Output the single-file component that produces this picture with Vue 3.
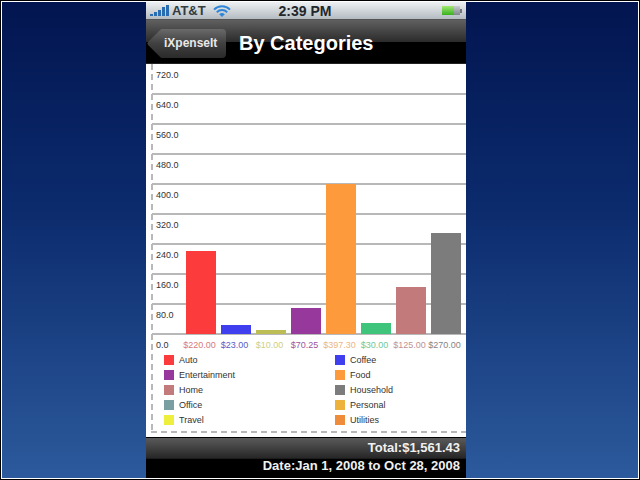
<template>
  <div class="screen">
    <div class="desktop">
      <div class="phone">
        <div class="status-bar">
          <div class="status-left">
            <div class="signal">
              <span v-for="h in signalBars" :key="h" class="signal-bar" :style="{ height: h + 'px' }"></span>
            </div>
            <span class="carrier">AT&amp;T</span>
            <svg class="wifi" width="18" height="12" viewBox="0 0 18 12">
              <path d="M1 4.6 A11.5 11.5 0 0 1 17 4.6" fill="none" stroke="#2f86d8" stroke-width="2" />
              <path d="M3.8 7.2 A7.5 7.5 0 0 1 14.2 7.2" fill="none" stroke="#2f86d8" stroke-width="2" />
              <path d="M9 12 L6.2 9.3 A4 4 0 0 1 11.8 9.3 Z" fill="#2f86d8" />
            </svg>
          </div>
          <span class="clock">2:39 PM</span>
          <div class="battery">
            <div class="battery-body"><div class="battery-fill"></div></div>
            <div class="battery-tip"></div>
          </div>
        </div>

        <div class="nav-bar">
          <div class="back-button">iXpenseIt</div>
          <h1 class="nav-title">By Categories</h1>
        </div>

        <div class="content">
          <div class="plot">
            <div class="chart">
              <div v-for="label in yLabels" :key="label" class="grid-row">{{ label }}</div>
              <div class="bars">
                <div v-for="bar in bars" :key="bar.amount" class="bar" :style="{ height: bar.height + 'px', background: bar.color }"></div>
              </div>
            </div>
            <div class="x-row">
              <span class="zero">0.0</span>
              <div class="amounts">
                <span v-for="bar in bars" :key="bar.amount" class="amount" :style="{ color: bar.text }">{{ bar.amount }}</span>
              </div>
            </div>
            <div class="legend">
              <div v-for="item in legend" :key="item.name" class="legend-item">
                <span class="swatch" :style="{ background: item.color }"></span>
                <span>{{ item.name }}</span>
              </div>
            </div>
          </div>
        </div>

        <div class="footer">
          <div class="total">Total:$1,561.43</div>
          <div class="date">Date:Jan 1, 2008 to Oct 28, 2008</div>
        </div>
      </div>
    </div>
  </div>
</template>

<script setup>
const signalBars = [2, 4, 6, 9, 11]
const yLabels = ['720.0', '640.0', '560.0', '480.0', '400.0', '320.0', '240.0', '160.0', '80.0']

const bars = [
  { amount: '$220.00', height: 83, color: '#fc3c3c', text: '#d87a7a' },
  { amount: '$23.00', height: 9, color: '#3f3ff0', text: '#5a5ac8' },
  { amount: '$10.00', height: 4, color: '#bdbd55', text: '#cfcf80' },
  { amount: '$70.25', height: 26, color: '#96389c', text: '#9a55a0' },
  { amount: '$397.30', height: 150, color: '#fd9a3c', text: '#ecb67e' },
  { amount: '$30.00', height: 11, color: '#3fc47c', text: '#70c898' },
  { amount: '$125.00', height: 47, color: '#c27a7a', text: '#bf9292' },
  { amount: '$270.00', height: 101, color: '#7c7c7c', text: '#858585' }
]

const legend = [
  { name: 'Auto', color: '#fc3c3c' },
  { name: 'Coffee', color: '#3f3ff0' },
  { name: 'Entertainment', color: '#96389c' },
  { name: 'Food', color: '#fd9a3c' },
  { name: 'Home', color: '#c27a7a' },
  { name: 'Household', color: '#7c7c7c' },
  { name: 'Office', color: '#7a9fa3' },
  { name: 'Personal', color: '#ecb23c' },
  { name: 'Travel', color: '#eeee3c' },
  { name: 'Utilities', color: '#ee8c3c' }
]
</script>

<style>
html, body {
  margin: 0;
  background: #000;
}
</style>

<style scoped>
.screen {
  width: 640px;
  height: 480px;
  box-sizing: border-box;
  padding: 1px;
  display: flex;
  overflow: hidden;
  background: #000;
  font-family: "Liberation Sans", Arial, sans-serif;
}

.desktop {
  flex: 1;
  box-sizing: border-box;
  padding-left: 144px;
  border: 1px solid #fff;
  background: linear-gradient(to bottom, #021550 0%, #0c2c6e 45%, #2c5a9c 100%);
}

.phone {
  width: 320px;
  height: 476px;
  display: flex;
  flex-direction: column;
  background: #fff;
}

.status-bar {
  height: 18px;
  display: grid;
  grid-template-columns: 1fr auto 1fr;
  align-items: center;
  padding: 0 4px;
  background: linear-gradient(to bottom, #eef1f3, #b4bbc0);
  border-bottom: 1px solid #555;
  box-sizing: border-box;
}

.status-left {
  display: flex;
  align-items: center;
  gap: 3px;
}

.signal {
  display: flex;
  align-items: flex-end;
  gap: 1px;
  height: 11px;
}

.signal-bar {
  width: 3px;
  background: #2a6cb0;
}

.carrier {
  font-size: 13px;
  font-weight: 700;
  color: #333a40;
  margin-right: 4px;
}

.clock {
  font-size: 14px;
  font-weight: 700;
  color: #22272b;
  margin-right: 2px;
}

.battery {
  justify-self: end;
  display: flex;
  align-items: center;
}

.battery-body {
  width: 18px;
  height: 9px;
  background: linear-gradient(to bottom, #c8ccd0, #80868c);
}

.battery-fill {
  width: 12px;
  height: 100%;
  background: linear-gradient(to bottom, #a0e870, #38b020);
}

.battery-tip {
  width: 2px;
  height: 4px;
  background: #70767c;
}

.nav-bar {
  height: 44px;
  box-sizing: border-box;
  display: flex;
  align-items: center;
  padding: 4px 0 0 15px;
  background: linear-gradient(to bottom, #606060 0%, #2c2c2c 50%, #000 51%, #000 100%);
  border-bottom: 1px solid #222;
}

.back-button {
  position: relative;
  isolation: isolate;
  width: 65px;
  height: 29px;
  box-sizing: border-box;
  padding-left: 3px;
  line-height: 29px;
  font-size: 12px;
  font-weight: 700;
  color: #e8e8e8;
  background: linear-gradient(to bottom, #6a6a6a, #404040 50%, #2a2a2a);
  border-radius: 0 4px 4px 0;
}

/* arrow point of the back button */
.back-button::before {
  content: "";
  position: absolute;
  z-index: -1;
  top: 4px;
  left: -10px;
  width: 21px;
  height: 21px;
  transform: rotate(45deg);
  background: linear-gradient(135deg, #6a6a6a, #404040 50%, #2a2a2a);
  border-radius: 2px;
}

.nav-title {
  margin: 0 0 0 13px;
  font-size: 20px;
  font-weight: 700;
  color: #fff;
}

.content {
  flex: 1;
  padding-bottom: 4px;
  display: flex;
  background: #fff;
}

.plot {
  flex: 1;
  margin-left: 5px;
  padding-left: 1px;
  background:
    repeating-linear-gradient(to bottom, #b8b8b8 0 6px, transparent 6px 10px) left top / 2px 100% no-repeat,
    repeating-linear-gradient(to right, #b8b8b8 0 6px, transparent 6px 10px) left bottom / 100% 2px no-repeat;
}

.chart {
  position: relative;
  padding-top: 1px;
}

.grid-row {
  height: 30px;
  box-sizing: border-box;
  border-bottom: 2px solid #b8b8b8;
  padding: 5px 0 0 4px;
  font-size: 9px;
  line-height: 11px;
  color: #333;
}

.bars {
  position: absolute;
  left: 34px;
  bottom: 1px;
  display: flex;
  align-items: flex-end;
  gap: 5px;
}

.bar {
  width: 30px;
}

.x-row {
  display: flex;
  height: 17px;
  box-sizing: border-box;
  padding-top: 4px;
  line-height: 12px;
  font-size: 9px;
}

.zero {
  width: 30px;
  padding-left: 4px;
  box-sizing: border-box;
  color: #333;
}

.amounts {
  display: flex;
}

.amount {
  width: 35px;
  text-align: center;
  white-space: nowrap;
}

.legend {
  display: grid;
  grid-template-columns: 171px 1fr;
  grid-auto-rows: 15px;
  padding-left: 12px;
  font-size: 9px;
  color: #333;
}

.legend-item {
  display: flex;
  align-items: center;
  gap: 5px;
}

.swatch {
  width: 10px;
  height: 10px;
}

.footer {
  height: 41px;
  box-sizing: border-box;
  padding-right: 6px;
  text-align: right;
  font-size: 13px;
  font-weight: 700;
  color: #f0f0f0;
  border-top: 1px solid #000;
  background: linear-gradient(to bottom, #5a5a5a 0%, #262626 51%, #000 52%, #000 100%);
}

.total {
  line-height: 19px;
}

.date {
  line-height: 17px;
}
</style>
